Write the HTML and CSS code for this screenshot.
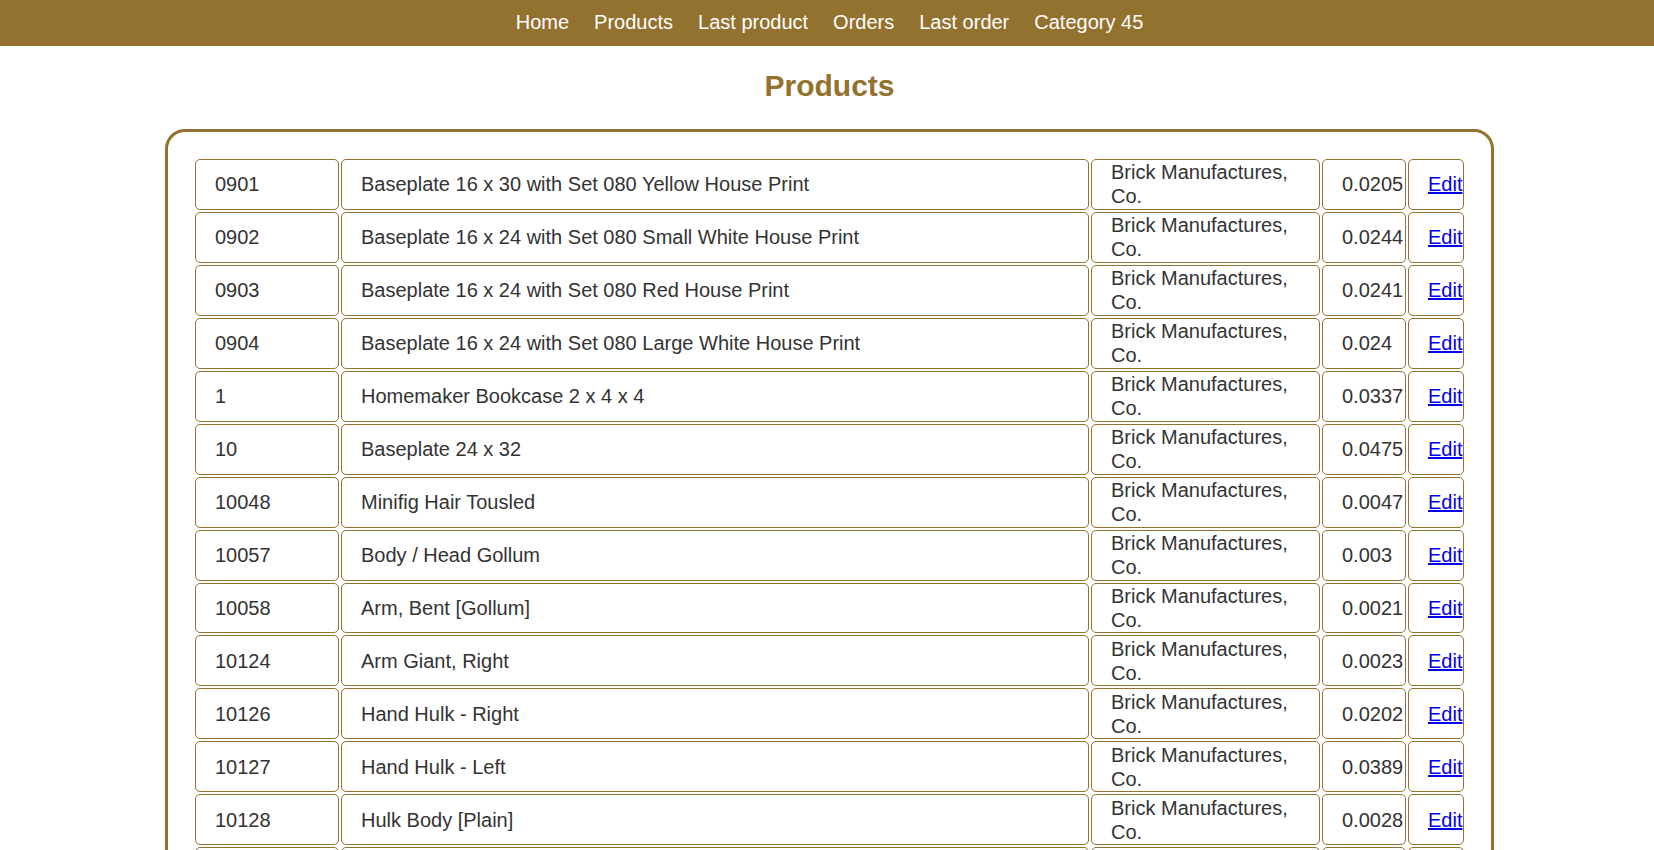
FILE: index.html
```html
<!DOCTYPE html>
<html lang="en">
<head>
<meta charset="utf-8">
<title>Products</title>
<link rel="stylesheet" href="styles.css">
</head>
<body>
<nav class="topnav">
  <a class="navlink" href="#">Home</a>
  <a class="navlink" href="#">Products</a>
  <a class="navlink" href="#">Last product</a>
  <a class="navlink" href="#">Orders</a>
  <a class="navlink" href="#">Last order</a>
  <a class="navlink" href="#">Category 45</a>
</nav>
<main class="content">
  <h1 class="title">Products</h1>
  <div class="card">
    <table class="products">
      <tbody>
        <tr><td class="c-id">0901</td><td class="c-name">Baseplate 16 x 30 with Set 080 Yellow House Print</td><td class="c-maker">Brick Manufactures, Co.</td><td class="c-price">0.0205</td><td class="c-edit"><a href="#">Edit</a></td></tr>
        <tr><td class="c-id">0902</td><td class="c-name">Baseplate 16 x 24 with Set 080 Small White House Print</td><td class="c-maker">Brick Manufactures, Co.</td><td class="c-price">0.0244</td><td class="c-edit"><a href="#">Edit</a></td></tr>
        <tr><td class="c-id">0903</td><td class="c-name">Baseplate 16 x 24 with Set 080 Red House Print</td><td class="c-maker">Brick Manufactures, Co.</td><td class="c-price">0.0241</td><td class="c-edit"><a href="#">Edit</a></td></tr>
        <tr><td class="c-id">0904</td><td class="c-name">Baseplate 16 x 24 with Set 080 Large White House Print</td><td class="c-maker">Brick Manufactures, Co.</td><td class="c-price">0.024</td><td class="c-edit"><a href="#">Edit</a></td></tr>
        <tr><td class="c-id">1</td><td class="c-name">Homemaker Bookcase 2 x 4 x 4</td><td class="c-maker">Brick Manufactures, Co.</td><td class="c-price">0.0337</td><td class="c-edit"><a href="#">Edit</a></td></tr>
        <tr><td class="c-id">10</td><td class="c-name">Baseplate 24 x 32</td><td class="c-maker">Brick Manufactures, Co.</td><td class="c-price">0.0475</td><td class="c-edit"><a href="#">Edit</a></td></tr>
        <tr><td class="c-id">10048</td><td class="c-name">Minifig Hair Tousled</td><td class="c-maker">Brick Manufactures, Co.</td><td class="c-price">0.0047</td><td class="c-edit"><a href="#">Edit</a></td></tr>
        <tr><td class="c-id">10057</td><td class="c-name">Body / Head Gollum</td><td class="c-maker">Brick Manufactures, Co.</td><td class="c-price">0.003</td><td class="c-edit"><a href="#">Edit</a></td></tr>
        <tr><td class="c-id">10058</td><td class="c-name">Arm, Bent [Gollum]</td><td class="c-maker">Brick Manufactures, Co.</td><td class="c-price">0.0021</td><td class="c-edit"><a href="#">Edit</a></td></tr>
        <tr><td class="c-id">10124</td><td class="c-name">Arm Giant, Right</td><td class="c-maker">Brick Manufactures, Co.</td><td class="c-price">0.0023</td><td class="c-edit"><a href="#">Edit</a></td></tr>
        <tr><td class="c-id">10126</td><td class="c-name">Hand Hulk - Right</td><td class="c-maker">Brick Manufactures, Co.</td><td class="c-price">0.0202</td><td class="c-edit"><a href="#">Edit</a></td></tr>
        <tr><td class="c-id">10127</td><td class="c-name">Hand Hulk - Left</td><td class="c-maker">Brick Manufactures, Co.</td><td class="c-price">0.0389</td><td class="c-edit"><a href="#">Edit</a></td></tr>
        <tr><td class="c-id">10128</td><td class="c-name">Hulk Body [Plain]</td><td class="c-maker">Brick Manufactures, Co.</td><td class="c-price">0.0028</td><td class="c-edit"><a href="#">Edit</a></td></tr>
        <tr><td class="c-id">10129</td><td class="c-name">Hulk Head</td><td class="c-maker">Brick Manufactures, Co.</td><td class="c-price">0.0031</td><td class="c-edit"><a href="#">Edit</a></td></tr>
        <tr><td class="c-id">10130</td><td class="c-name">Hulk Legs</td><td class="c-maker">Brick Manufactures, Co.</td><td class="c-price">0.0026</td><td class="c-edit"><a href="#">Edit</a></td></tr>
      </tbody>
    </table>
  </div>
</main>
</body>
</html>
```

FILE: styles.css
```css
html, body {
  margin: 0;
  padding: 0;
  background: #ffffff;
}

body {
  font-family: "Liberation Sans", Arial, sans-serif;
  font-size: 20px;
  color: #333333;
}

.topnav {
  background: #93712e;
  display: flex;
  justify-content: center;
  gap: 25px;
  padding: 11px 0 12px 5px;
  line-height: 23px;
}

.navlink {
  color: #ffffff;
  text-decoration: none;
  font-size: 20px;
}

.content {
  padding: 0 160px 0 165px;
}

.title {
  margin: 23px 0 26px;
  text-align: center;
  color: #93712e;
  font-size: 30px;
  line-height: 34px;
  font-weight: bold;
}

.card {
  box-sizing: border-box;
  border: 3px solid #93712e;
  border-radius: 20px;
  padding: 25px;
}

.products {
  width: 100%;
  table-layout: fixed;
  border-collapse: separate;
  border-spacing: 2px;
}

.products td {
  box-sizing: border-box;
  border: 1px solid #93712e;
  border-radius: 5px;
  padding: 0.48px 0.5px 0.48px 19px;
  line-height: 24px;
  vertical-align: middle;
  text-align: left;
  white-space: normal;
}

.c-id { width: 144px; }
.c-name { width: 748px; }
.c-maker { width: 229px; }
.c-price { width: 84px; }
.c-edit { width: 56px; white-space: nowrap; }

.c-edit a {
  color: #0000ee;
  text-decoration: underline;
}
```
